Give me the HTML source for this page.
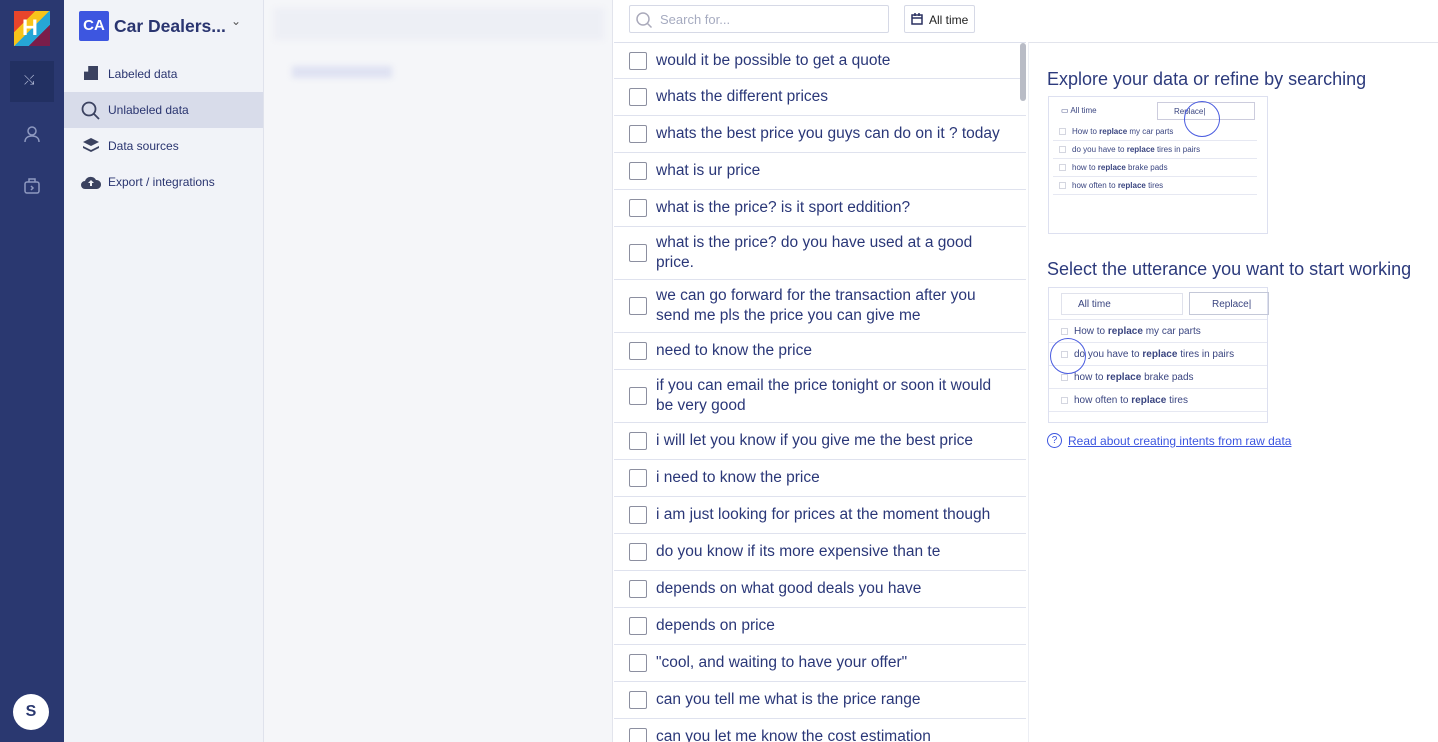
<!DOCTYPE html>
<html><head><meta charset="utf-8"><style>
*{box-sizing:border-box;margin:0;padding:0}
body{width:1438px;height:742px;overflow:hidden;font-family:"Liberation Sans",sans-serif;background:#fff;position:relative;color:#2a3778}
.rail{position:absolute;left:0;top:0;width:64px;height:742px;background:#2a3870}
.nav{position:absolute;left:64px;top:0;width:200px;height:742px;background:#f1f3f8;border-right:1px solid #dfe2ec}
.mid{position:absolute;left:264px;top:0;width:349px;height:742px;background:#f5f6f9;border-right:1px solid #e2e4ec}
.list{position:absolute;left:614px;top:42px;width:412px;height:700px;background:#fff;border-top:1px solid #dde0ec;overflow:hidden}
.row{display:flex;align-items:center;border-bottom:1px solid #dfe2ee;padding-left:15px;padding-right:16px;font-size:15.5px;line-height:20px;color:#2a3778}
.cb{flex:none;width:18px;height:18px;border:1.5px solid #8c8fa0;border-radius:2px;margin-right:9px}
.right{position:absolute;left:1028px;top:42px;right:0;bottom:0;border-top:1px solid #e2e4ec;border-left:1px solid #eceef4}
h2{font-weight:400;font-size:18px;color:#2c3a7c;position:absolute;left:1047px}
.mini{position:absolute;border:1px solid #dde0f0;background:#fff;font-size:8px;color:#3a4580}
.mrow{border-bottom:1px solid #e6e8f2;display:flex;align-items:center;padding-left:6px}
.mcb{width:7px;height:7px;border:1px solid #d4d6e0;margin-right:6px}
</style></head><body>
<div class="rail">
 <div style="position:absolute;left:14px;top:11px;width:36px;height:35px;background:linear-gradient(135deg,#e8452c 0 30%,#f7c41a 30% 50%,#26a6d6 50% 70%,#7a1d4a 70%)"></div>
 <div style="position:absolute;left:22px;top:18px;width:20px;height:20px;color:#fff;font:900 22px 'Liberation Sans';line-height:20px">H</div>
 <div style="position:absolute;left:10px;top:61px;width:44px;height:41px;background:#223062"></div>
 <div style="position:absolute;left:24px;top:72px;color:#b8c0dc;font-size:13px">⤯</div>
 <svg style="position:absolute;left:23px;top:125px" width="18" height="18" fill="none" stroke="#8e99c0" stroke-width="1.5"><circle cx="9" cy="6" r="4"/><path d="M2 17c0-4 3-6 7-6s7 2 7 6"/></svg>
 <svg style="position:absolute;left:23px;top:177px" width="18" height="18" fill="none" stroke="#8e99c0" stroke-width="1.5"><rect x="2" y="5" width="14" height="11" rx="2"/><path d="M6 5V2h6v3M8 9l2 2-2 2"/></svg>
 <div style="position:absolute;left:13px;top:694px;width:36px;height:36px;border-radius:50%;background:#fff;color:#2a3870;font-weight:700;font-size:16px;text-align:center;line-height:36px">S</div>
</div>
<div class="nav">
 <div style="position:absolute;left:15px;top:11px;width:30px;height:30px;background:#3d56e0;border-radius:2px;color:#fff;font-weight:700;font-size:15px;text-align:center;line-height:30px">CA</div>
 <div style="position:absolute;left:50px;top:16px;font-weight:700;font-size:17.5px;color:#2a3570">Car Dealers...</div>
 <div style="position:absolute;left:167px;top:14px;color:#555;font-size:12px">⌄</div>
 <div style="position:absolute;left:0;top:92px;width:199px;height:36px;background:#d8dcea"></div>
 <div style="position:absolute;left:20px;top:66px;width:14px;height:14px;background:#3b4260;clip-path:polygon(30% 0,100% 0,100% 100%,0 100%,0 40%,30% 40%)"></div>
 <svg style="position:absolute;left:17px;top:101px" width="20" height="20" fill="none" stroke="#3b4260" stroke-width="1.8"><circle cx="8" cy="8" r="6.5"/><path d="M13 13l5 5"/></svg>
 <svg style="position:absolute;left:18px;top:137px" width="18" height="18" fill="#3b4260"><path d="M9 1l8 4-8 4-8-4z"/><path d="M1 9l8 4 8-4v2l-8 4-8-4z"/></svg>
 <svg style="position:absolute;left:16px;top:174px" width="22" height="16" fill="#3b4260"><path d="M5 15a4 4 0 010-8 6 6 0 0111-1 4.5 4.5 0 011 9z"/><path d="M11 6l-3 3h2v3h2V9h2z" fill="#f1f3f8"/></svg>
 <div style="position:absolute;left:44px;top:67px;font-size:12px;color:#2a3570">Labeled data</div>
 <div style="position:absolute;left:44px;top:103px;font-size:12px;color:#2a3570">Unlabeled data</div>
 <div style="position:absolute;left:44px;top:139px;font-size:12px;color:#2a3570">Data sources</div>
 <div style="position:absolute;left:44px;top:175px;font-size:12px;color:#2a3570">Export / integrations</div>
</div>
<div class="mid">
 <div style="position:absolute;left:10px;top:8px;width:330px;height:32px;background:#edeff5;filter:blur(3px)"></div>
 <div style="position:absolute;left:28px;top:66px;width:100px;height:12px;background:#dfe2f2;filter:blur(3px)"></div>
</div>
<div style="position:absolute;left:629px;top:5px;width:260px;height:28px;border:1px solid #d6d9e6;border-radius:2px;background:#fff">
 <svg style="position:absolute;left:5px;top:5px" width="18" height="18" fill="none" stroke="#aab" stroke-width="1.5"><circle cx="8" cy="8" r="6"/><path d="M12.5 12.5l4 4"/></svg>
 <span style="position:absolute;left:30px;top:6px;font-size:13px;color:#a6abc0">Search for...</span>
</div>
<div style="position:absolute;left:904px;top:5px;width:71px;height:28px;border:1px solid #d6d9e6;border-radius:2px;background:#fff">
 <svg style="position:absolute;left:6px;top:7px" width="12" height="12" fill="none" stroke="#2a3060" stroke-width="1.5"><rect x="1" y="2" width="10" height="9"/><path d="M1 5h10M4 0v3M8 0v3"/></svg>
 <span style="position:absolute;left:24px;top:7px;font-size:12px;color:#222">All time</span>
</div>
<div class="list">
 <div class="row" style="height:36px"><div class="cb"></div>would it be possible to get a quote</div>
 <div class="row" style="height:37px"><div class="cb"></div>whats the different prices</div>
 <div class="row" style="height:37px"><div class="cb"></div><span style="white-space:nowrap">whats the best price you guys can do on it ? today</span></div>
 <div class="row" style="height:37px"><div class="cb"></div>what is ur price</div>
 <div class="row" style="height:37px"><div class="cb"></div>what is the price? is it sport eddition?</div>
 <div class="row" style="height:53px"><div class="cb"></div>what is the price? do you have used at a good<br>price.</div>
 <div class="row" style="height:53px"><div class="cb"></div>we can go forward for the transaction after you<br>send me pls the price you can give me</div>
 <div class="row" style="height:37px"><div class="cb"></div>need to know the price</div>
 <div class="row" style="height:53px"><div class="cb"></div>if you can email the price tonight or soon it would<br>be very good</div>
 <div class="row" style="height:37px"><div class="cb"></div>i will let you know if you give me the best price</div>
 <div class="row" style="height:37px"><div class="cb"></div>i need to know the price</div>
 <div class="row" style="height:37px"><div class="cb"></div>i am just looking for prices at the moment though</div>
 <div class="row" style="height:37px"><div class="cb"></div>do you know if its more expensive than te</div>
 <div class="row" style="height:37px"><div class="cb"></div>depends on what good deals you have</div>
 <div class="row" style="height:37px"><div class="cb"></div>depends on price</div>
 <div class="row" style="height:37px"><div class="cb"></div>"cool, and waiting to have your offer"</div>
 <div class="row" style="height:37px"><div class="cb"></div>can you tell me what is the price range</div>
 <div class="row" style="height:37px"><div class="cb"></div>can you let me know the cost estimation</div>
 <div style="position:absolute;left:406px;top:0;width:6px;height:58px;background:#b9bcc6;border-radius:3px"></div>
</div>
<div class="right"></div>
<h2 style="top:69px">Explore your data or refine by searching</h2>
<div class="mini" style="left:1048px;top:96px;width:220px;height:138px">
 <div style="height:26px;position:relative"><span style="position:absolute;left:12px;top:9px">▭ All time</span><div style="position:absolute;left:108px;top:5px;width:98px;height:18px;border:1px solid #ccd;padding:4px 0 0 16px">Replace|</div></div>
 <div class="mrow" style="height:18px;margin:0 10px 0 4px"><div class="mcb"></div>How to <b>&nbsp;replace&nbsp;</b> my car parts</div>
 <div class="mrow" style="height:18px;margin:0 10px 0 4px"><div class="mcb"></div>do you have to <b>&nbsp;replace&nbsp;</b> tires in pairs</div>
 <div class="mrow" style="height:18px;margin:0 10px 0 4px"><div class="mcb"></div>how to <b>&nbsp;replace&nbsp;</b> brake pads</div>
 <div class="mrow" style="height:18px;margin:0 10px 0 4px"><div class="mcb"></div>how often to <b>&nbsp;replace&nbsp;</b> tires</div>
 <div style="position:absolute;left:135px;top:4px;width:36px;height:36px;border:1px solid #4a5ce0;border-radius:50%"></div>
</div>
<h2 style="top:259px">Select the utterance you want to start working</h2>
<div class="mini" style="left:1048px;top:287px;width:220px;height:136px;font-size:10px">
 <div style="height:32px;position:relative;border-bottom:1px solid #e6e8f2"><div style="position:absolute;left:12px;top:5px;width:122px;height:22px;border:1px solid #e0e2ec;padding:5px 0 0 16px">All time</div><div style="position:absolute;left:140px;top:4px;width:80px;height:23px;border:1px solid #c4c8d8;padding:6px 0 0 22px">Replace|</div></div>
 <div class="mrow" style="height:23px;padding-left:12px"><div class="mcb"></div>How to <b>&nbsp;replace&nbsp;</b> my car parts</div>
 <div class="mrow" style="height:23px;padding-left:12px"><div class="mcb"></div>do you have to <b>&nbsp;replace&nbsp;</b> tires in pairs</div>
 <div class="mrow" style="height:23px;padding-left:12px"><div class="mcb"></div>how to <b>&nbsp;replace&nbsp;</b> brake pads</div>
 <div class="mrow" style="height:23px;padding-left:12px"><div class="mcb"></div>how often to <b>&nbsp;replace&nbsp;</b> tires</div>
 <div style="position:absolute;left:1px;top:50px;width:36px;height:36px;border:1px solid #4a5ce0;border-radius:50%"></div>
</div>
<div style="position:absolute;left:1047px;top:433px;width:15px;height:15px;border:1.3px solid #3d56e0;border-radius:50%;color:#3d56e0;font-size:10px;text-align:center;line-height:13px">?</div>
<div style="position:absolute;left:1068px;top:434px;font-size:12px;color:#3d56e0;text-decoration:underline">Read about creating intents from raw data</div>
</body></html>
